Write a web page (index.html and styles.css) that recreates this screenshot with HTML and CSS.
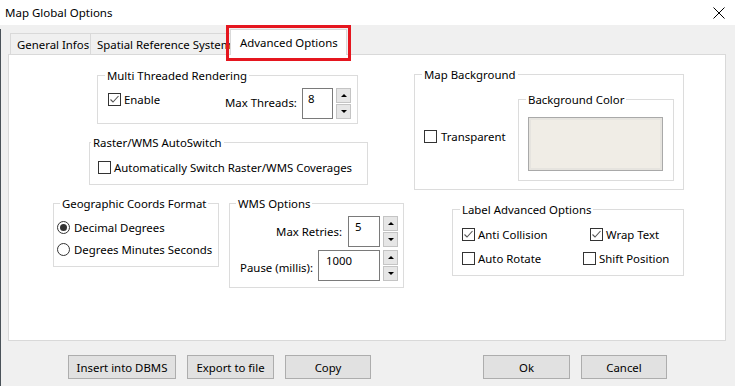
FILE: index.html
```html
<!DOCTYPE html>
<html>
<head>
<meta charset="utf-8">
<link rel="stylesheet" href="styles.css">
</head>
<body>
<div class="titlebar">
  <span class="title">Map Global Options</span>
  <svg class="close" width="12" height="12" viewBox="0 0 12 12"><path d="M0.5 0.5 L11.5 11.5 M11.5 0.5 L0.5 11.5" stroke="#000" stroke-width="1" fill="none"/></svg>
</div>
<div class="client">
  <div class="tabs">
    <div class="tab tab-gen">General Infos</div>
    <div class="tab tab-srs">Spatial Reference System</div>
    <div class="tab tab-sel">Advanced Options<div class="redbox"></div></div>
  </div>
  <div class="panel">
    <div class="col-left">
      <div class="group g-mtr">
        <div class="gtitle">Multi Threaded Rendering</div>
        <div class="mtr-row">
          <label class="chk chk-enable"><span class="box"><svg width="11" height="11" viewBox="0 0 11 11"><path d="M1.5 5.5 L4 8 L9.5 2" stroke="#555" stroke-width="1.1" fill="none"/></svg></span>Enable</label>
          <span class="lbl lbl-threads">Max Threads:</span>
          <div class="input in-threads">8</div>
          <div class="spin"><div class="sb"><span class="up"></span></div><div class="sb"><span class="down"></span></div></div>
        </div>
      </div>
      <div class="group g-raster">
        <div class="gtitle gtitle-tight">Raster/WMS AutoSwitch</div>
        <label class="chk chk-raster"><span class="box"></span>Automatically Switch Raster/WMS Coverages</label>
      </div>
      <div class="row-bottom">
        <div class="group g-geo">
          <div class="gtitle">Geographic Coords Format</div>
          <label class="rad rad-1"><span class="circle on"></span>Decimal Degrees</label>
          <label class="rad rad-2"><span class="circle"></span>Degrees Minutes Seconds</label>
        </div>
        <div class="group g-wms">
          <div class="gtitle">WMS Options</div>
          <div class="wms-row wms-row1">
            <span class="lbl">Max Retries:</span>
            <div class="input in-retries">5</div>
            <div class="spin"><div class="sb"><span class="up"></span></div><div class="sb"><span class="down"></span></div></div>
          </div>
          <div class="wms-row wms-row2">
            <span class="lbl">Pause (millis):</span>
            <div class="input in-pause">1000</div>
            <div class="spin"><div class="sb"><span class="up"></span></div><div class="sb"><span class="down"></span></div></div>
          </div>
        </div>
      </div>
    </div>
    <div class="col-right">
      <div class="group g-bg">
        <div class="gtitle">Map Background</div>
        <div class="bg-row">
          <label class="chk chk-transp"><span class="box"></span>Transparent</label>
          <div class="group g-color">
            <div class="gtitle">Background Color</div>
            <div class="swatch"></div>
          </div>
        </div>
      </div>
      <div class="group g-label">
        <div class="gtitle gtitle-label">Label Advanced Options</div>
        <div class="lab-row lab-row1">
          <label class="chk w-anti"><span class="box"><svg width="11" height="11" viewBox="0 0 11 11"><path d="M1.5 5.5 L4 8 L9.5 2" stroke="#555" stroke-width="1.1" fill="none"/></svg></span>Anti Collision</label>
          <label class="chk"><span class="box"><svg width="11" height="11" viewBox="0 0 11 11"><path d="M1.5 5.5 L4 8 L9.5 2" stroke="#555" stroke-width="1.1" fill="none"/></svg></span>Wrap Text</label>
        </div>
        <div class="lab-row lab-row2">
          <label class="chk w-rot"><span class="box"></span>Auto Rotate</label>
          <label class="chk"><span class="box"></span>Shift Position</label>
        </div>
      </div>
    </div>
  </div>
  <div class="footer">
    <button class="btn b-insert">Insert into DBMS</button>
    <button class="btn b-export">Export to file</button>
    <button class="btn b-copy">Copy</button>
    <button class="btn b-ok">Ok</button>
    <button class="btn b-cancel">Cancel</button>
  </div>
</div>
<div class="bottomstrip"></div>
</body>
</html>
```

FILE: styles.css
```css
* { box-sizing: border-box; }
html, body { margin: 0; padding: 0; }
body {
  width: 735px;
  height: 386px;
  overflow: hidden;
  background: #f0f0f0;
  font-family: "Noto Sans", "Open Sans", sans-serif;
  font-size: 11.4px;
  line-height: 15px;
  color: #000;
}
.titlebar {
  height: 25px;
  background: #fff;
  display: flex;
  align-items: center;
  padding-left: 5px;
}
.title { font-size: 11.5px; flex: 1; }
.close { margin-right: 10px; margin-top: 0px; }

.client {
  height: 358px;
  border-left: 1px solid #4a5259;
  background: #f0f0f0;
}
.bottomstrip { height: 3px; background: #3a3d40; }

.tabs {
  display: flex;
  align-items: flex-end;
  height: 25px;
  margin-top: 4px;
  margin-left: 9px;
  position: relative;
  z-index: 2;
}
.tab {
  height: 21px;
  border: 1px solid #d9d9d9;
  border-bottom: none;
  background: #f0f0f0;
  padding: 3px 0 0 6px;
  white-space: nowrap;
  overflow: hidden;
}
.tab-gen { width: 81px; }
.tab-srs { width: 141px; margin-left: -1px; }
.tab-sel {
  width: 117px;
  height: 26px;
  margin-left: -1px;
  margin-bottom: -1px;
  background: #fff;
  padding: 5px 0 0 9px;
  overflow: visible;
  position: relative;
}
.redbox {
  position: absolute;
  left: -5px;
  top: -5px;
  right: -5px;
  bottom: -6px;
  border: 3px solid #e5161f;
}

.panel {
  margin-left: 7px;
  width: 718px;
  height: 287px;
  background: #fff;
  border: 1px solid #d9d9d9;
  display: flex;
  align-items: flex-start;
}
.col-left { width: 396px; }
.col-right { margin-left: 9px; }

.group { border: 1px solid #dcdcdc; background: #fff; }
.gtitle {
  width: fit-content;
  background: #fff;
  padding: 0 2px;
  margin-left: 7px;
  margin-top: -8px;
  line-height: 15px;
  white-space: nowrap;
}
.gtitle-tight { margin-left: 1px; }
.gtitle-label { margin-left: 7px; }

.chk, .rad {
  display: flex;
  align-items: center;
  height: 15px;
  white-space: nowrap;
}
.box {
  width: 13px;
  height: 13px;
  border: 1px solid #333;
  background: #fff;
  margin-right: 3px;
  flex: none;
  display: flex;
}
.circle {
  width: 13px;
  height: 13px;
  border: 1px solid #333;
  border-radius: 50%;
  background: #fff;
  margin-right: 4px;
  flex: none;
  display: flex;
  align-items: center;
  justify-content: center;
}
.circle.on::after {
  content: "";
  width: 7px;
  height: 7px;
  border-radius: 50%;
  background: #333;
}

.input {
  border: 1px solid #7a7a7a;
  background: #fff;
  padding: 2px 5px;
  height: 31px;
}
.spin {
  margin-left: 3px;
  width: 15px;
  display: flex;
  flex-direction: column;
  gap: 1px;
}
.sb {
  height: 15px;
  background: #e6e6e6;
  border: 1px solid #c4c4c4;
  display: flex;
  align-items: center;
  justify-content: center;
}
.up { width: 0; height: 0; border-left: 3px solid transparent; border-right: 3px solid transparent; border-bottom: 3px solid #000; }
.down { width: 0; height: 0; border-left: 3px solid transparent; border-right: 3px solid transparent; border-top: 3px solid #000; }

/* Multi threaded */
.g-mtr { margin-left: 88px; margin-top: 20px; width: 261px; height: 49px; }
.mtr-row { display: flex; align-items: flex-start; margin-top: 5px; }
.chk-enable { margin-left: 10px; margin-top: 4px; width: 117px; }
.lbl-threads { width: 77px; margin-top: 7px; }
.in-threads { width: 31px; }

/* Raster */
.g-raster { margin-left: 80px; margin-top: 18px; width: 279px; height: 43px; }
.chk-raster { margin-left: 8px; margin-top: 10px; }

/* Geo + WMS */
.row-bottom { display: flex; align-items: flex-start; margin-top: 18px; }
.g-geo { margin-left: 44px; width: 166px; height: 64px; }
.g-geo .gtitle { margin-left: 6px; }
.rad { margin-left: 3px; }
.rad-1 { margin-top: 9px; }
.rad-2 { margin-top: 7px; }
.g-wms { margin-left: 10px; width: 175px; height: 85px; }
.g-wms .gtitle { margin-left: 6px; }
.wms-row { display: flex; justify-content: flex-end; align-items: center; padding-right: 5px; }
.wms-row1 { margin-top: 5px; }
.wms-row2 { margin-top: 3px; }
.wms-row .lbl { margin-right: 6px; }
.wms-row2 .lbl { margin-top: 3px; margin-right: 5px; }
.in-retries { width: 32px; padding-left: 6px; }
.in-pause { width: 62px; padding-left: 7px; }

/* Map background */
.g-bg { margin-top: 19px; width: 270px; height: 116px; }
.bg-row { display: flex; align-items: flex-start; margin-top: 17px; }
.chk-transp { margin-left: 9px; margin-top: 30px; width: 94px; }
.chk-transp .box { margin-right: 4px; }
.g-color { width: 156px; height: 82px; }
.swatch {
  margin-left: 9px;
  margin-top: 10px;
  width: 135px;
  height: 54px;
  border: 1px solid #a9a9a9;
  background: #f0ede6;
  box-shadow: inset 0 0 0 2px #e6e4df;
}

/* Label advanced */
.g-label { margin-left: 38px; margin-top: 19px; width: 232px; height: 67px; }
.lab-row { display: flex; margin-left: 9px; }
.lab-row1 { margin-top: 10px; }
.lab-row2 { margin-top: 9px; }
.w-anti { width: 128px; }
.w-rot { width: 121px; }

/* Footer */
.footer { display: flex; margin-top: 14px; padding-left: 67px; }
.btn {
  height: 24px;
  background: #e1e1e1;
  border: 1px solid #adadad;
  font-family: "Noto Sans", "Open Sans", sans-serif;
  font-size: 11.4px;
  color: #000;
  padding: 0;
  margin: 0 0 0 11px;
}
.b-insert { width: 108px; margin-left: 0; }
.b-export { width: 87px; }
.b-copy { width: 86px; }
.b-ok { width: 87px; margin-left: 112px; }
.b-cancel { width: 86px; }
```
